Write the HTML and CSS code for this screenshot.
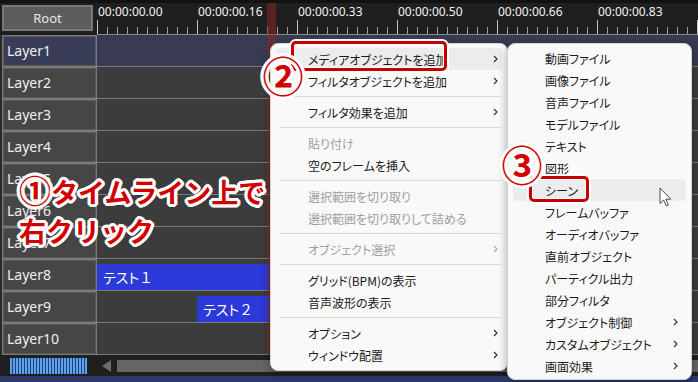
FILE: index.html
```html
<!DOCTYPE html>
<html lang="ja">
<head>
    <meta charset="UTF-8">
    <meta name="viewport" content="width=device-width, initial-scale=1.0">
    <title>Timeline</title>
    <link rel="stylesheet" href="styles.css">
</head>

<body>
    <div class="app">
        <div class="topbar">
            <div class="root-cell">
                <button class="root-btn">Root</button>
            </div>
            <div class="ruler">
                <div class="mark"><span>00:00:00.00</span></div>
                <div class="mark"><span>00:00:00.16</span></div>
                <div class="mark"><span>00:00:00.33</span></div>
                <div class="mark"><span>00:00:00.50</span></div>
                <div class="mark"><span>00:00:00.66</span></div>
                <div class="mark"><span>00:00:00.83</span></div>
                <div class="mark next"><span>0</span></div>
            </div>
        </div>

        <div class="layers">
            <div class="row active"><div class="label">Layer1</div><div class="track"></div></div>
            <div class="row"><div class="label">Layer2</div><div class="track"></div></div>
            <div class="row"><div class="label">Layer3</div><div class="track"></div></div>
            <div class="row"><div class="label">Layer4</div><div class="track"></div></div>
            <div class="row"><div class="label">Layer5</div><div class="track"></div></div>
            <div class="row"><div class="label">Layer6</div><div class="track"></div></div>
            <div class="row"><div class="label">Layer7</div><div class="track"></div></div>
            <div class="row">
                <div class="label">Layer8</div>
                <div class="track"><div class="clip" style="margin-left: 0px;">テスト<span class="num">１</span></div></div>
            </div>
            <div class="row">
                <div class="label">Layer9</div>
                <div class="track"><div class="clip" style="margin-left: 100px;">テスト<span class="num">２</span></div></div>
            </div>
            <div class="row"><div class="label">Layer10</div><div class="track"></div></div>
        </div>

        <div class="scrollrow">
            <div class="meter"></div>
            <div class="scroll-arrow"></div>
            <div class="scroll-thumb"></div>
        </div>
        <div class="statusbar"></div>

        <div class="playhead"></div>

        <div class="menu main-menu">
            <div class="item hover">メディアオブジェクトを追加<svg class="chev" viewBox="0 0 5 8"><path d="M1 1 L4 4 L1 7"/></svg></div>
            <div class="item">フィルタオブジェクトを追加<svg class="chev" viewBox="0 0 5 8"><path d="M1 1 L4 4 L1 7"/></svg></div>
            <div class="sep"></div>
            <div class="item">フィルタ効果を追加<svg class="chev" viewBox="0 0 5 8"><path d="M1 1 L4 4 L1 7"/></svg></div>
            <div class="sep"></div>
            <div class="item disabled">貼り付け</div>
            <div class="item">空のフレームを挿入</div>
            <div class="sep"></div>
            <div class="item disabled">選択範囲を切り取り</div>
            <div class="item disabled">選択範囲を切り取りして詰める</div>
            <div class="sep"></div>
            <div class="item disabled">オブジェクト選択<svg class="chev" viewBox="0 0 5 8"><path d="M1 1 L4 4 L1 7"/></svg></div>
            <div class="sep"></div>
            <div class="item">グリッド(BPM)の表示</div>
            <div class="item">音声波形の表示</div>
            <div class="sep"></div>
            <div class="item">オプション<svg class="chev" viewBox="0 0 5 8"><path d="M1 1 L4 4 L1 7"/></svg></div>
            <div class="item">ウィンドウ配置<svg class="chev" viewBox="0 0 5 8"><path d="M1 1 L4 4 L1 7"/></svg></div>
        </div>

        <div class="menu sub-menu">
            <div class="item">動画ファイル</div>
            <div class="item">画像ファイル</div>
            <div class="item">音声ファイル</div>
            <div class="item">モデルファイル</div>
            <div class="item">テキスト</div>
            <div class="item">図形</div>
            <div class="item hover">シーン</div>
            <div class="item">フレームバッファ</div>
            <div class="item">オーディオバッファ</div>
            <div class="item">直前オブジェクト</div>
            <div class="item">パーティクル出力</div>
            <div class="item">部分フィルタ</div>
            <div class="item">オブジェクト制御<svg class="chev" viewBox="0 0 5 8"><path d="M1 1 L4 4 L1 7"/></svg></div>
            <div class="item">カスタムオブジェクト<svg class="chev" viewBox="0 0 5 8"><path d="M1 1 L4 4 L1 7"/></svg></div>
            <div class="item">画面効果<svg class="chev" viewBox="0 0 5 8"><path d="M1 1 L4 4 L1 7"/></svg></div>
        </div>

        <!-- annotations -->
        <div class="note-box box-media"></div>
        <div class="note-box box-scene"></div>
        <div class="note-num num-2">②</div>
        <div class="note-num num-3">③</div>
        <div class="note-text"><span class="circ">①</span>タイムライン上で<br>右クリック</div>

        <svg class="cursor" viewBox="0 0 13 21">
            <path d="M1 1 L1 16.5 L4.6 13 L7.2 19 L9.4 18 L6.9 12.2 L11.8 12.2 Z"/>
        </svg>
    </div>
</body>
</html>
```

FILE: styles.css
```css
body
{
    margin: 0;
    background-color: #1e1e1e;
    font-family: "Noto Sans", "Noto Sans CJK JP", sans-serif;
}

.app
{
    position: relative;
    width: 698px;
    height: 382px;
    overflow: hidden;
    display: flex;
    flex-direction: column;
    background-color: #2a2a2a;
}

/* header: root button + ruler */

.topbar
{
    display: flex;
    height: 35px;
    box-sizing: border-box;
    border-top: 3px solid #121212;
    background-color: #1f1f1f;
}

.root-cell
{
    width: 97px;
    flex-shrink: 0;
    padding: 2px 4px 0 2px;
    box-sizing: border-box;
}

.root-btn
{
    display: block;
    width: 91px;
    height: 26px;
    padding: 0;
    border: 2px solid #777777;
    background-color: #5d5d5d;
    color: #e8e8e8;
    font-family: "Noto Sans", sans-serif;
    font-size: 13px;
}

.ruler
{
    flex: 1;
    display: flex;
    overflow: hidden;
    border-bottom: 1px solid #8a8a8a;
}

.mark
{
    width: 100px;
    flex-shrink: 0;
    padding-top: 2px;
    color: #f2f2f2;
    font-size: 12px;
    line-height: 14px;
    background:
        linear-gradient(#c4c4c4, #c4c4c4) no-repeat left bottom / 1px 14px,
        repeating-linear-gradient(to right, #a0a0a0 0 1px, transparent 1px 10px) no-repeat left bottom / 100% 7px;
}

.mark span
{
    padding-left: 1px;
}

.mark.next
{
    color: #4aa3ff;
}

/* layer rows */

.layers
{
    display: flex;
    flex-direction: column;
}

.row
{
    display: flex;
    height: 32px;
}

.row .label
{
    width: 95px;
    margin-left: 2px;
    box-sizing: border-box;
    border: 1px solid #7a7a7a;
    box-shadow: inset 0 0 0 1px #5a5a5a;
    background-color: #464646;
    color: #f0f0f0;
    font-size: 14px;
    line-height: 29px;
    padding-left: 4px;
}

.row .track
{
    flex: 1;
    display: flex;
    align-items: flex-end;
    box-sizing: border-box;
    border-bottom: 1px solid #7a7a7a;
    background-color: #3c3c3c;
}

.row.active .label
{
    background-color: #383c57;
}

.row.active .track
{
    background-color: #383b51;
}

.clip
{
    width: 300px;
    height: 26px;
    flex-shrink: 0;
    padding-left: 6px;
    box-sizing: border-box;
    background-color: #2b3ad8;
    color: #ffffff;
    font-family: "Noto Sans CJK JP", sans-serif;
    font-feature-settings: "palt";
    font-size: 14px;
    line-height: 26px;
}

.clip .num
{
    font-feature-settings: normal;
}

/* bottom scroll area */

.scrollrow
{
    display: flex;
    align-items: center;
    height: 21px;
    background-color: #1f1f1f;
}

.meter
{
    width: 77px;
    height: 16px;
    margin-left: 10px;
    background: repeating-linear-gradient(to right, #5ba2f0 0 2px, #24406e 2px 3px);
}

.scroll-arrow
{
    width: 0;
    height: 0;
    margin-left: 15px;
    border-top: 6px solid transparent;
    border-bottom: 6px solid transparent;
    border-right: 9px solid #6c6c6c;
}

.scroll-thumb
{
    flex: 1;
    height: 12px;
    margin-left: 6px;
    background-color: #656565;
}

.statusbar
{
    height: 6px;
    background-color: #2e3a6c;
}

.playhead
{
    position: absolute;
    left: 267px;
    top: 3px;
    width: 9px;
    height: 352px;
    background-color: rgba(150, 40, 40, 0.5);
}

/* context menus */

.menu
{
    position: absolute;
    box-sizing: border-box;
    border: 1px solid #d3d3d3;
    border-radius: 8px;
    background-color: #f9f9f9;
    box-shadow: 0 3px 10px rgba(0, 0, 0, 0.35);
    font-family: "Noto Sans CJK JP", sans-serif;
    font-feature-settings: "palt";
    font-size: 12px;
    color: #1a1a1a;
}

.main-menu
{
    left: 270px;
    top: 43px;
    width: 238px;
    padding: 4px 0;
}

.sub-menu
{
    left: 507px;
    top: 43px;
    width: 185px;
    padding: 3px 0 2px;
}

.menu .item
{
    display: flex;
    align-items: center;
    height: 22px;
    margin: 0 5px;
    padding: 0 4px 0 32px;
    border-radius: 4px;
}

.sub-menu .item
{
    padding-right: 8px;
}

.menu .item.hover
{
    background-color: #ececec;
}

.menu .item.disabled
{
    color: #9e9e9e;
}

.chev
{
    width: 5px;
    height: 8px;
    margin-left: auto;
    fill: none;
    stroke: #333333;
    stroke-width: 1.2;
}

.item.disabled .chev
{
    stroke: #a8a8a8;
}

.sep
{
    height: 1px;
    margin: 4px 6px 4px 8px;
    background-color: #dadada;
}

/* red annotations */

.note-box
{
    position: absolute;
    box-sizing: border-box;
    border: 3px solid #c40000;
    border-radius: 5px;
    box-shadow: 0 0 0 2px #ffffff, inset 0 0 0 1px #ffffff;
}

.box-media
{
    left: 291px;
    top: 41px;
    width: 156px;
    height: 30px;
}

.box-scene
{
    left: 529px;
    top: 176px;
    width: 60px;
    height: 26px;
}

.note-num,
.note-text
{
    position: absolute;
    color: #d20000;
    font-family: "Noto Sans CJK JP", sans-serif;
    font-weight: 700;
    text-shadow:
        2px 0 #fff, -2px 0 #fff, 0 2px #fff, 0 -2px #fff,
        2px 2px #fff, -2px -2px #fff, 2px -2px #fff, -2px 2px #fff,
        3px 0 #fff, -3px 0 #fff, 0 3px #fff, 0 -3px #fff,
        1px 3px #fff, -1px 3px #fff, 1px -3px #fff, -1px -3px #fff,
        3px 1px #fff, 3px -1px #fff, -3px 1px #fff, -3px -1px #fff,
        0 0 5px rgba(0, 0, 0, 0.3);
}

.note-num
{
    width: 44px;
    height: 44px;
    font-size: 41px;
    line-height: 44px;
    text-align: center;
}

.num-2
{
    left: 261px;
    top: 52px;
}

.num-3
{
    left: 500px;
    top: 141px;
}

.note-text
{
    left: 19px;
    top: 170px;
    font-size: 27px;
    line-height: 39px;
    white-space: nowrap;
}

.note-text .circ
{
    font-size: 32px;
}

.cursor
{
    position: absolute;
    left: 659px;
    top: 187px;
    width: 13px;
    height: 21px;
    fill: #ffffff;
    stroke: #4a4a4a;
    stroke-width: 1;
}
```
